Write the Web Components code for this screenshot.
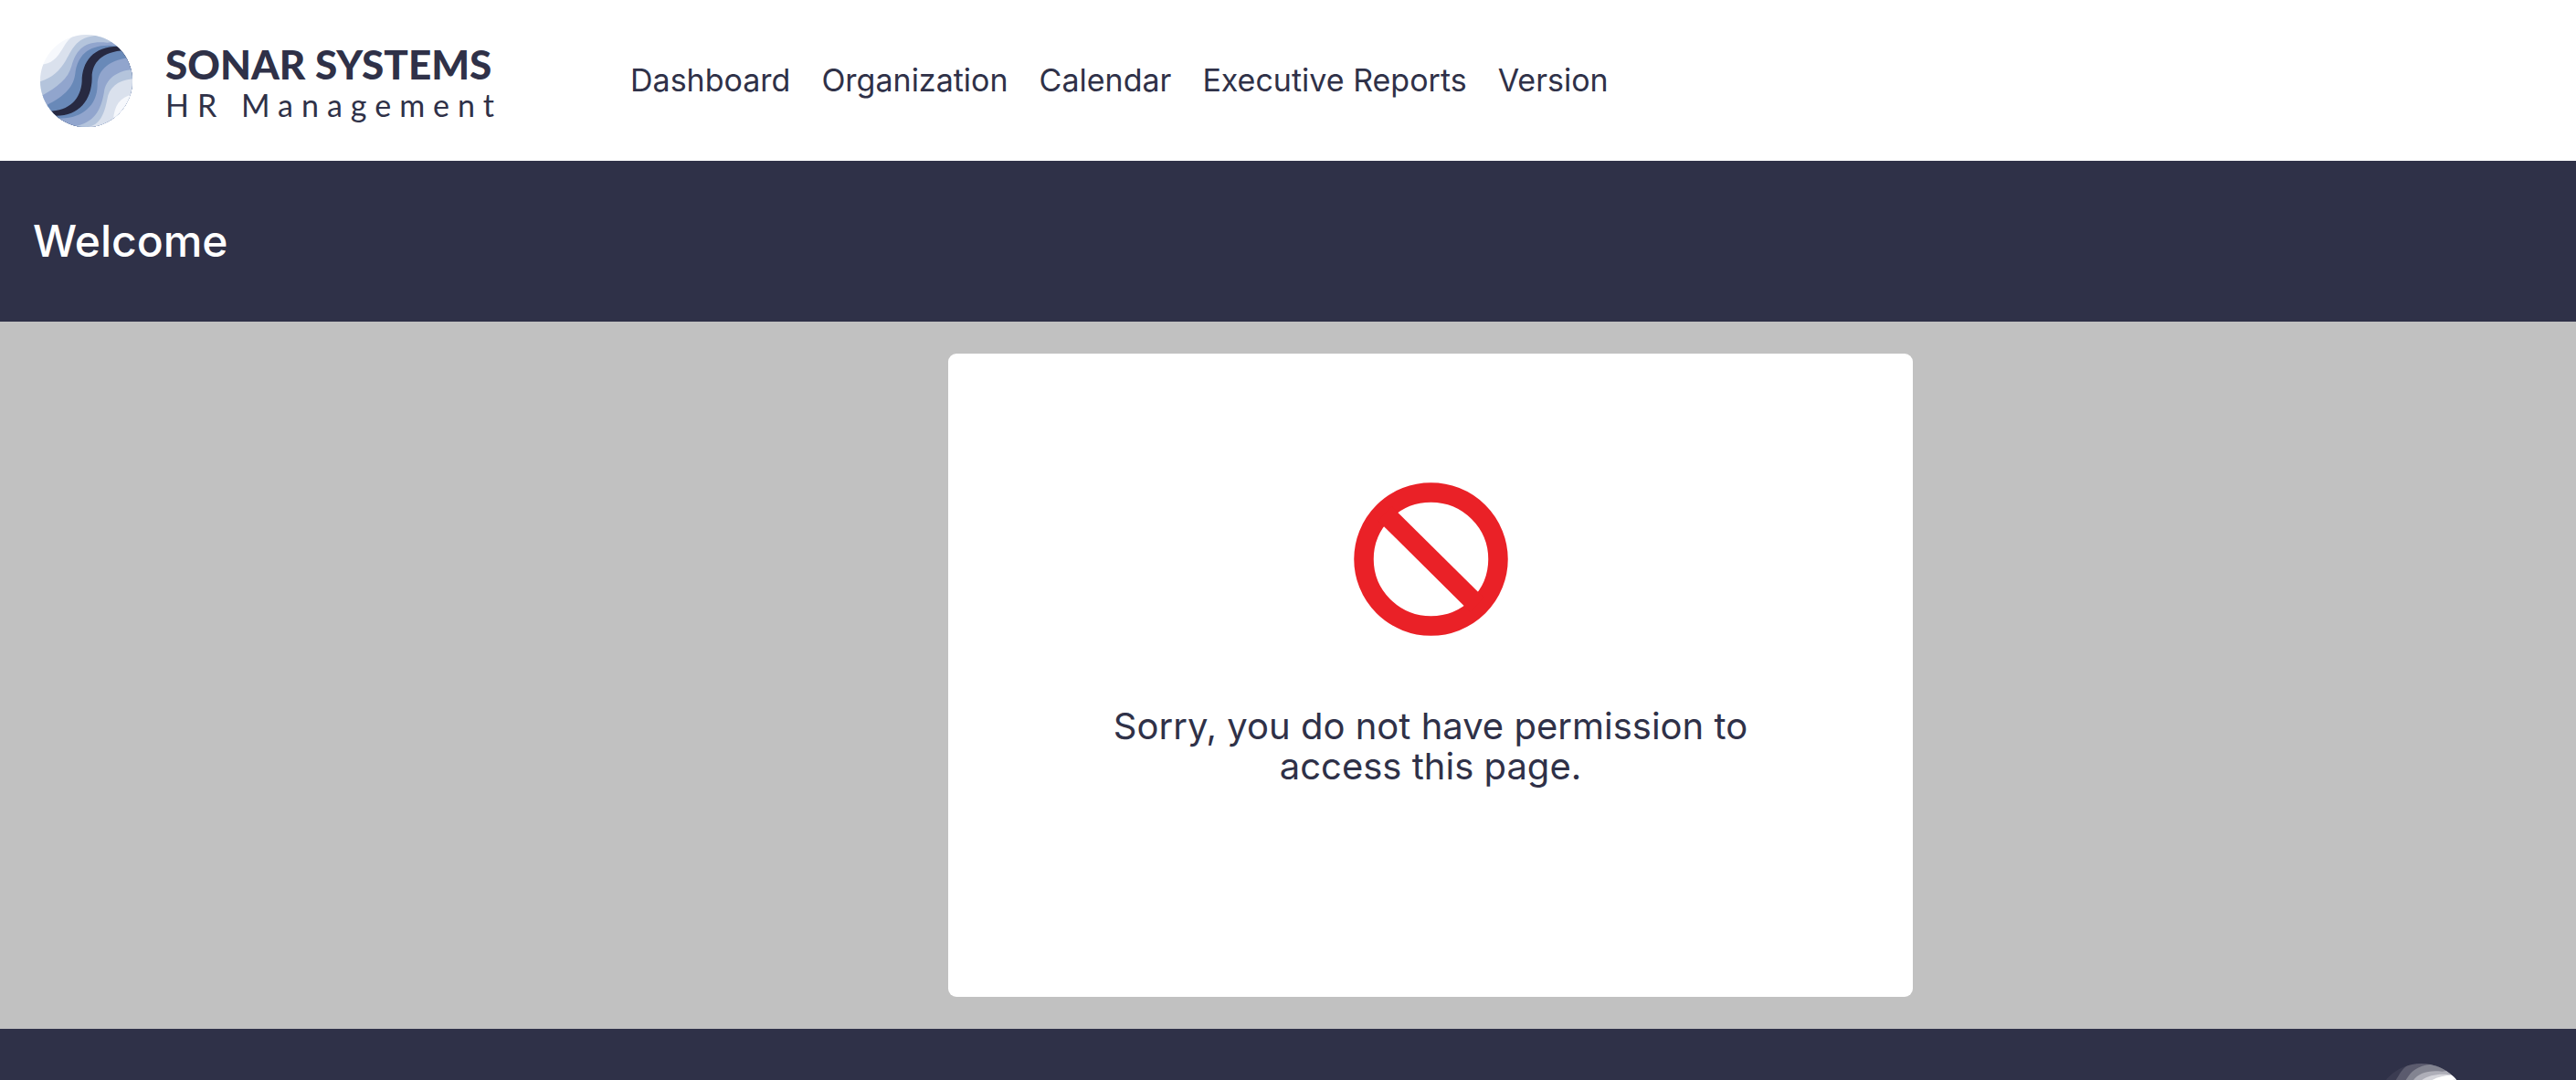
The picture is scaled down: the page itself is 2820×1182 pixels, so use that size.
<!DOCTYPE html>
<html lang="en">
<head>
<meta charset="utf-8">
<title>Sonar Systems HR Management</title>
<style>
  html, body { margin: 0; height: 100%; }
  body { overflow: hidden; font-family: Inter, "Noto Sans", sans-serif; color: #2f3148; background: #c1c1c1; }
</style>
</head>
<body>
<hr-app></hr-app>
<script>
const define = (name, html) => {
  const template = document.createElement('template');
  template.innerHTML = html;
  customElements.define(name, class extends HTMLElement {
    constructor() {
      super();
      this.attachShadow({ mode: 'open' }).append(template.content.cloneNode(true));
    }
  });
};

define('hr-brand', `
<style>
  :host { display: flex; align-items: center; gap: 36px; width: 496px; color: #2f3148;
    --b1: #f6f8fc; --b2: #dae1ed; --b3: #b4c4dc; --b4: #91a5cd; --b5: #6989b8; --core: #272941; }
  :host([inverse]) { color: #fff;
    --b1: #3b3c52; --b2: #5b5b6e; --b3: #838491; --b4: #aeaeb8; --b5: #d5d5db; --core: #fff; }
  svg { width: 101px; height: 101px; flex: none; }
  .words { padding-top: 6px; font-family: Lato, "Open Sans", sans-serif; white-space: nowrap; }
  .name { font-size: 44px; line-height: 48px; font-weight: 900; }
  .sub { font-size: 34px; line-height: 42px; font-weight: 400; letter-spacing: 9px; }
</style>
<svg viewBox="42 52 303 303" aria-hidden="true">
  <clipPath id="disc"><circle cx="193.500" cy="203.500" r="151.500"/></clipPath>
  <g clip-path="url(#disc)">
    <path fill="var(--b1)" d="M0 0H400V400H0Z"/>
    <path fill="var(--b2)" d="M40 150C78 151 98 127 116 97C129 75 138 62 160 52L400 0V400H0Z"/>
    <path fill="var(--b3)" d="M36 207C78 197 105 172 126 137C151 91 164 60 228 54L400 0V400H0Z"/>
    <path fill="var(--b4)" d="M36 258C98 227 134 196 145 155C160 102 187 70 262 78L400 60V400H0Z"/>
    <path fill="var(--b5)" d="M50 290C116 257 150 230 157 180C164 118 204 82 282 88L400 90V400H0Z"/>
    <path fill="var(--core)" d="M70 303C138 303 176 262 179 205C179 139 218 89 300 90L400 100V400H0Z"/>
    <path fill="var(--b5)" d="M320 103C244 108 211 144 212 195C211 268 168 320 90 318L60 400H400V100Z"/>
    <path fill="var(--b4)" d="M345 126C273 131 229 165 230 218C229 288 175 331 100 326L90 400H400V120Z"/>
    <path fill="var(--b3)" d="M355 165C292 168 258 198 252 239C242 302 218 343 150 354L110 400H400V160Z"/>
    <path fill="var(--b2)" d="M355 196C298 198 268 225 262 264C252 316 236 353 190 356L170 400H400V190Z"/>
    <path fill="var(--b1)" d="M350 249C308 253 284 282 282 335L282 400H400V240Z"/>
  </g>
</svg>
<div class="words"><div class="name">SONAR SYSTEMS</div><div class="sub">HR Management</div></div>
`);

define('hr-header', `
<style>
  :host { display: flex; align-items: center; gap: 150px; height: 176px; box-sizing: border-box; padding: 0 44px; background: #fff; }
  nav { display: flex; gap: 34px; }
  a { font-size: 34px; line-height: 44px; color: #2f3148; text-decoration: none; white-space: nowrap; }
</style>
<hr-brand></hr-brand>
<nav aria-label="Main">
  <a href="#dashboard">Dashboard</a><a href="#organization">Organization</a><a href="#calendar">Calendar</a><a href="#reports">Executive Reports</a><a href="#version">Version</a>
</nav>
`);

define('hr-banner', `
<style>
  :host { display: flex; align-items: center; height: 176px; box-sizing: border-box; padding: 0 36px; background: #2f3148; color: #fff; }
  h1 { margin: 0; font-size: 48px; line-height: 60px; font-weight: 500; }
</style>
<h1><slot></slot></h1>
`);

define('hr-notice', `
<style>
  :host { display: flex; flex-direction: column; align-items: center; gap: 77px; box-sizing: border-box;
    width: 1056px; min-height: 704px; padding: 141px 144px; background: #fff; border-radius: 9px; }
  svg { width: 169px; height: 168px; flex: none; }
  p { margin: 0; font-size: 40px; line-height: 44px; text-align: center; }
</style>
<svg viewBox="0 0 169 168" fill="none" stroke="#ea2127" stroke-width="21.500" aria-hidden="true">
  <ellipse cx="84.500" cy="84" rx="73.500" ry="73"/>
  <path d="M34 34L135 134"/>
</svg>
<p><slot></slot></p>
`);

define('hr-footer', `
<style>
  :host { display: flex; flex: 1 1 0; min-height: 0; overflow: hidden; box-sizing: border-box; justify-content: flex-end; align-items: flex-start; padding: 38px 36px 0; background: #2f3148; }
</style>
<hr-brand inverse></hr-brand>
`);

define('hr-app', `
<style>
  :host { display: block; height: 100vh; overflow: hidden; }
  .page { display: flex; flex-direction: column; min-width: 3132px; height: 100%; }
  hr-header, hr-banner, main { flex: none; }
  main { display: flex; justify-content: center; padding: 35px 36px; }
</style>
<div class="page">
  <hr-header></hr-header>
  <hr-banner>Welcome</hr-banner>
  <main><hr-notice>Sorry, you do not have permission to access this page.</hr-notice></main>
  <hr-footer></hr-footer>
</div>
`);
</script>
</body>
</html>
